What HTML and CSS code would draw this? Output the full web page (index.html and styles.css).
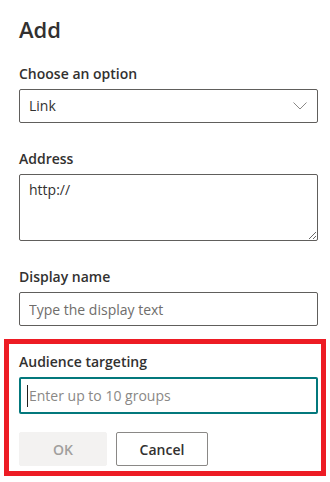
FILE: index.html
```html
<!DOCTYPE html>
<html lang="en">
<head>
<meta charset="utf-8">
<title>Add</title>
<link rel="stylesheet" href="styles.css">
</head>
<body>
<div class="panel">
  <h1 class="title">Add</h1>

  <div class="field first">
    <label class="label">Choose an option</label>
    <div class="select">
      <span class="select-text">Link</span>
      <svg class="chevron" width="14" height="8" viewBox="0 0 14 8"><polyline points="0.5,0.5 7,7 13.5,0.5" fill="none" stroke="#8a8886" stroke-width="1"/></svg>
    </div>
  </div>

  <div class="field">
    <label class="label" for="addr">Address</label>
    <textarea id="addr" class="textarea">http://</textarea>
  </div>

  <div class="field">
    <label class="label" for="disp">Display name</label>
    <input id="disp" class="input" type="text" placeholder="Type the display text">
  </div>

  <div class="highlight">
    <div class="field-in">
      <label class="label" for="aud">Audience targeting</label>
      <div class="input-focused">
        <span class="caret"></span>
        <input id="aud" class="bare-input" type="text" placeholder="Enter up to 10 groups">
      </div>
    </div>
    <div class="actions">
      <button class="btn btn-disabled" disabled>OK</button>
      <button class="btn btn-default">Cancel</button>
    </div>
  </div>
</div>
</body>
</html>
```

FILE: styles.css
```css
* { box-sizing: border-box; }

html, body {
  margin: 0;
  padding: 0;
  background: #ffffff;
}

body {
  font-family: "Open Sans", "Noto Sans", sans-serif;
  color: #323130;
  font-size: 14px;
}

.panel {
  padding: 13px 12px 0 19px;
}

.title {
  margin: 0;
  font-size: 22px;
  font-weight: 600;
  line-height: 32px;
  color: #323130;
}

.field {
  margin-top: 26px;
  display: flex;
  flex-direction: column;
}

.field.first {
  margin-top: 19px;
}

.label {
  display: block;
  font-size: 14px;
  font-weight: 600;
  line-height: 20px;
  margin-bottom: 5px;
  color: #323130;
}

.select {
  height: 34px;
  border: 1px solid #605e5c;
  border-radius: 2px;
  display: flex;
  align-items: center;
  justify-content: space-between;
  padding: 0 10px 0 9px;
}

.select-text {
  font-size: 14px;
  color: #323130;
  line-height: 20px;
}

.chevron {
  display: block;
}

.textarea {
  display: block;
  width: 100%;
  height: 67px;
  border: 1px solid #605e5c;
  border-radius: 2px;
  padding: 5px 9px;
  font-family: inherit;
  font-size: 14px;
  line-height: 20px;
  color: #323130;
  resize: vertical;
  margin: 0;
}

.input {
  display: block;
  width: 100%;
  height: 34px;
  border: 1px solid #605e5c;
  border-radius: 2px;
  padding: 0 9px;
  font-family: inherit;
  font-size: 14px;
  color: #323130;
  margin: 0;
  outline: none;
}

.input::placeholder {
  color: #6f6d6b;
  opacity: 1;
}

.highlight {
  margin: 13px -8px 0 -15px;
  border: 5px solid #ed1c24;
  padding: 8px 3px 5px 10px;
}

.field-in {
  display: flex;
  flex-direction: column;
}

.input-focused {
  height: 37px;
  border: 2px solid #03787c;
  border-radius: 2px;
  display: flex;
  align-items: center;
  padding: 0 0 0 6px;
}

.caret {
  width: 1px;
  height: 22px;
  background: #201f1e;
  flex: none;
}

.bare-input {
  flex: 1;
  min-width: 0;
  border: none;
  outline: none;
  padding: 0 0 0 1px;
  margin: 0;
  background: transparent;
  font-family: inherit;
  font-size: 14px;
  color: #323130;
}

.bare-input::placeholder {
  color: #8a8886;
  opacity: 1;
}

.actions {
  display: flex;
  gap: 9px;
  margin-top: 18px;
}

.btn {
  height: 34px;
  border-radius: 2px;
  font-family: inherit;
  font-size: 14px;
  font-weight: 600;
  padding: 0 16px;
  margin: 0;
}

.btn-disabled {
  width: 88px;
  background: #f3f2f1;
  border: 1px solid #f3f2f1;
  color: #a19f9d;
}

.btn-default {
  width: 92px;
  background: #ffffff;
  border: 1px solid #8a8886;
  color: #323130;
}
```
